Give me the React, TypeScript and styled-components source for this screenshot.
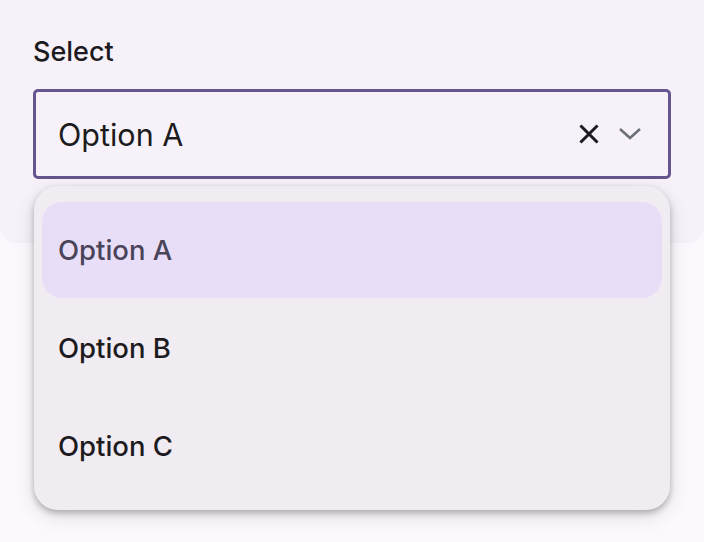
import styled, { createGlobalStyle } from "styled-components";

const GlobalStyle = createGlobalStyle`
  body {
    margin: 0;
    background: #fdf8fd;
    font-family: Inter, "Noto Sans", sans-serif;
  }
`;

const options = ["Option A", "Option B", "Option C"];

function App() {
  const selected = "Option A";
  return (
    <Page>
      <GlobalStyle />
      <Panel>
        <Label>Select</Label>
        <Field>
          <Trigger>
            <Value>{selected}</Value>
            <Icons>
              <svg width="20" height="20" viewBox="0 0 20 20">
                <path d="M2.5 2.5 L17.5 17.5 M17.5 2.5 L2.5 17.5" stroke="#1d1b20" strokeWidth="3" strokeLinecap="square" />
              </svg>
              <svg width="24" height="14" viewBox="0 0 24 14">
                <path d="M2 2 L12 11 L22 2" stroke="#6d7078" strokeWidth="2.6" fill="none" />
              </svg>
            </Icons>
          </Trigger>
          <Menu>
            {options.map((o) => (
              <Item key={o} active={o === selected}>
                {o}
              </Item>
            ))}
          </Menu>
        </Field>
      </Panel>
    </Page>
  );
}

const Page = styled.div`
  min-height: 100vh;
  position: relative;
`;

const Panel = styled.div`
  background: #f7f2fa;
  height: 243px;
  box-sizing: border-box;
  padding: 36px 33px 0;
  border-radius: 0 0 16px 16px;
`;

const Label = styled.div`
  font-size: 27px;
  font-weight: 500;
  color: #1d1b20;
  line-height: 32px;
  margin-bottom: 21px;
`;

const Field = styled.div`
  position: relative;
`;

const Trigger = styled.div`
  height: 90px;
  box-sizing: border-box;
  border: 3px solid #65558f;
  border-radius: 5px;
  display: flex;
  align-items: center;
  justify-content: space-between;
  padding: 0 26px 0 22px;
`;

const Value = styled.span`
  font-size: 30.5px;
  color: #1d1b20;
`;

const Icons = styled.div`
  display: flex;
  align-items: center;
  gap: 19px;
`;

const Menu = styled.div`
  position: absolute;
  z-index: 10;
  top: 97px;
  left: 1px;
  right: 1px;
  background: #f1ecf2;
  border-radius: 24px;
  padding: 16px 8px;
  box-shadow: 0 3px 6px rgba(0, 0, 0, 0.25), 0 6px 20px rgba(0, 0, 0, 0.12);
`;

const Item = styled.div<{ active?: boolean }>`
  height: 96px;
  margin-bottom: 2px;
  display: flex;
  align-items: center;
  padding: 0 16px;
  border-radius: 20px;
  font-size: 27.5px;
  font-weight: 500;
  color: ${(p) => (p.active ? "#4a4458" : "#1d1b20")};
  background: ${(p) => (p.active ? "#e8def8" : "transparent")};
  &:last-child {
    margin-bottom: 0;
  }
`;

export default App;
